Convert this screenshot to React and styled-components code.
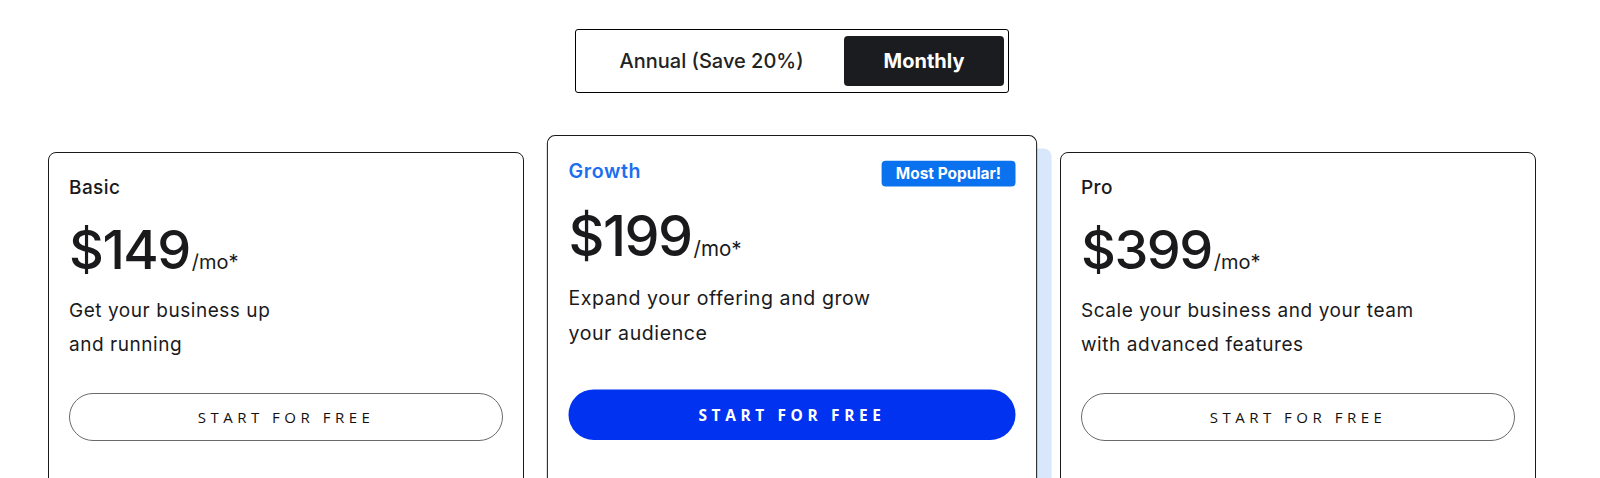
import styled, { createGlobalStyle } from "styled-components";
import { useState } from "react";

const GlobalStyle = createGlobalStyle`
  body {
    margin: 0;
    background: #fff;
    font-family: Inter, "Noto Sans", sans-serif;
    color: #1a1a1c;
    overflow: hidden;
  }
`;

const Pagina = styled.main`
  width: 1584px;
  padding-top: 29px;
  display: flex;
  flex-direction: column;
  align-items: center;
`;

const Alternador = styled.div`
  display: flex;
  padding: 6px 4px;
  border: 1px solid #000;
  border-radius: 3px;
`;

const BotaoPeriodo = styled.button`
  height: 50px;
  padding: 0 40px;
  border: none;
  border-radius: 4px;
  cursor: pointer;
  font-family: Inter, sans-serif;
  font-size: 20px;
  font-weight: ${(p) => (p.$ativo ? 700 : 500)};
  background: ${(p) => (p.$ativo ? "#1b1c1f" : "transparent")};
  color: ${(p) => (p.$ativo ? "#fff" : "#222")};
`;

const ListaPlanos = styled.section`
  margin-top: 42px;
  display: flex;
  align-items: flex-start;
  gap: 30px;
`;

const Cartao = styled.article`
  box-sizing: border-box;
  width: 476px;
  min-height: 700px;
  margin-top: ${(p) => (p.$destaque ? "0" : "17px")};
  padding: 23px 20px;
  background: #fff;
  border: 1px solid #1a1a1a;
  border-radius: 8px;
  ${(p) =>
    p.$destaque &&
    `
    transform: scale(1.03);
    transform-origin: top center;
    box-shadow: 14px 13px 0 0 #d8e7fb;
  `}
`;

const Cabecalho = styled.div`
  display: flex;
  align-items: center;
  justify-content: space-between;
  height: 24px;
`;

const NomePlano = styled.h2`
  margin: 0;
  font-size: 19px;
  line-height: 24px;
  letter-spacing: ${(p) => (p.$destaque ? "0.6px" : "0.4px")};
  font-weight: ${(p) => (p.$destaque ? 600 : 500)};
  color: ${(p) => (p.$destaque ? "#1b6ef0" : "#1a1a1c")};
`;

const Selo = styled.span`
  display: inline-flex;
  align-items: center;
  height: 25px;
  margin-top: 3px;
  padding: 0 14px;
  border-radius: 4px;
  background: #0a72ee;
  color: #fff;
  font-size: 15px;
  font-weight: 700;
`;

const LinhaPreco = styled.div`
  margin-top: 23px;
  display: flex;
  align-items: baseline;
`;

const Preco = styled.span`
  font-size: 54px;
  line-height: 54px;
  font-weight: 500;
  letter-spacing: -1.5px;
`;

const Periodo = styled.span`
  margin-left: 2px;
  font-size: 20px;
  font-weight: 400;
`;

const Descricao = styled.p`
  margin: 17px 0 0;
  font-size: 19px;
  line-height: 34px;
  letter-spacing: 0.55px;
`;

const BotaoComecar = styled.button`
  box-sizing: border-box;
  display: block;
  width: 100%;
  height: ${(p) => (p.$destaque ? "49px" : "48px")};
  margin-top: ${(p) => (p.$destaque ? "37px" : "31px")};
  border-radius: 25px;
  cursor: pointer;
  font-family: "Open Sans", sans-serif;
  font-size: 15px;
  letter-spacing: 4.5px;
  text-transform: uppercase;
  border: ${(p) => (p.$destaque ? "none" : "1px solid #6a6a6a")};
  background: ${(p) => (p.$destaque ? "#0132ef" : "#fff")};
  color: ${(p) => (p.$destaque ? "#fff" : "#111")};
  font-weight: ${(p) => (p.$destaque ? 700 : 500)};
`;

const planos = [
  {
    nome: "Basic",
    preco: "$149",
    linhas: ["Get your business up", "and running"],
  },
  {
    nome: "Growth",
    preco: "$199",
    linhas: ["Expand your offering and grow", "your audience"],
    destaque: true,
  },
  {
    nome: "Pro",
    preco: "$399",
    linhas: ["Scale your business and your team", "with advanced features"],
  },
];

export default function App() {
  const [mensal, setMensal] = useState(true);

  return (
    <>
      <GlobalStyle />
      <Pagina>
        <Alternador>
          <BotaoPeriodo $ativo={!mensal} onClick={() => setMensal(false)}>
            Annual (Save 20%)
          </BotaoPeriodo>
          <BotaoPeriodo $ativo={mensal} onClick={() => setMensal(true)}>
            Monthly
          </BotaoPeriodo>
        </Alternador>
        <ListaPlanos>
          {planos.map((plano) => (
            <Cartao key={plano.nome} $destaque={plano.destaque}>
              <Cabecalho>
                <NomePlano $destaque={plano.destaque}>{plano.nome}</NomePlano>
                {plano.destaque && <Selo>Most Popular!</Selo>}
              </Cabecalho>
              <LinhaPreco>
                <Preco>{plano.preco}</Preco>
                <Periodo>/mo*</Periodo>
              </LinhaPreco>
              <Descricao>
                {plano.linhas[0]}
                <br />
                {plano.linhas[1]}
              </Descricao>
              <BotaoComecar $destaque={plano.destaque}>Start for free</BotaoComecar>
            </Cartao>
          ))}
        </ListaPlanos>
      </Pagina>
    </>
  );
}
